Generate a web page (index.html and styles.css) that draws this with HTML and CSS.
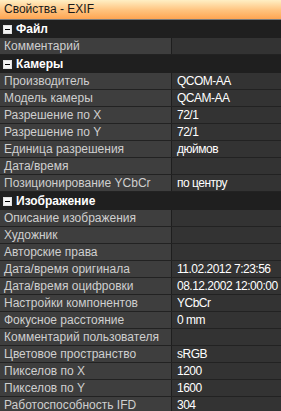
FILE: index.html
```html
<!DOCTYPE html>
<html>
<head>
<meta charset="utf-8">
<link rel="stylesheet" href="styles.css">
</head>
<body>
<div class="panel">
  <div class="title">Свойства - EXIF</div>
  <div class="grid">
    <div class="cat"><span class="box"></span>Файл</div>
    <div class="row"><div class="name">Комментарий</div><div class="val"></div></div>
    <div class="cat"><span class="box"></span>Камеры</div>
    <div class="row"><div class="name">Производитель</div><div class="val">QCOM-AA</div></div>
    <div class="row"><div class="name">Модель камеры</div><div class="val">QCAM-AA</div></div>
    <div class="row"><div class="name">Разрешение по X</div><div class="val">72/1</div></div>
    <div class="row"><div class="name">Разрешение по Y</div><div class="val">72/1</div></div>
    <div class="row"><div class="name">Единица разрешения</div><div class="val">дюймов</div></div>
    <div class="row"><div class="name">Дата/время</div><div class="val"></div></div>
    <div class="row"><div class="name">Позиционирование YCbCr</div><div class="val">по центру</div></div>
    <div class="cat"><span class="box"></span>Изображение</div>
    <div class="row"><div class="name">Описание изображения</div><div class="val"></div></div>
    <div class="row"><div class="name">Художник</div><div class="val"></div></div>
    <div class="row"><div class="name">Авторские права</div><div class="val"></div></div>
    <div class="row"><div class="name">Дата/время оригинала</div><div class="val">11.02.2012 7:23:56</div></div>
    <div class="row"><div class="name">Дата/время оцифровки</div><div class="val">08.12.2002 12:00:00</div></div>
    <div class="row"><div class="name">Настройки компонентов</div><div class="val">YCbCr</div></div>
    <div class="row"><div class="name">Фокусное расстояние</div><div class="val">0 mm</div></div>
    <div class="row"><div class="name">Комментарий пользователя</div><div class="val"></div></div>
    <div class="row"><div class="name">Цветовое пространство</div><div class="val">sRGB</div></div>
    <div class="row"><div class="name">Пикселов по X</div><div class="val">1200</div></div>
    <div class="row"><div class="name">Пикселов по Y</div><div class="val">1600</div></div>
    <div class="row"><div class="name">Работоспособность IFD</div><div class="val">304</div></div>
  </div>
</div>
</body>
</html>
```
FILE: styles.css
```css
html, body {
  margin: 0;
  padding: 0;
  background: #202020;
}
.panel {
  width: 281px;
  height: 411px;
  overflow: hidden;
  font-family: "Liberation Sans", Arial, sans-serif;
  font-size: 12px;
  background: #202020;
}
.title {
  height: 19px;
  line-height: 19px;
  padding-left: 4px;
  color: #1a1a1a;
  font-size: 12px;
  background: linear-gradient(#ffefc4, #ffc27d 55%, #ffa552);
  border-bottom: 1px solid #7a7a7a;
}
.grid {
  display: flex;
  flex-direction: column;
}
.cat {
  height: 18px;
  display: flex;
  align-items: center;
  color: #ffffff;
  font-weight: bold;
  font-size: 12px;
  background: #1f1f1f;
}
.box {
  width: 7px;
  height: 7px;
  margin: 0 4px 0 3px;
  background: #f4f4f4;
  border: 1px solid #e0e0e0;
  position: relative;
  flex: none;
}
.box::after {
  content: "";
  position: absolute;
  left: 1px;
  right: 1px;
  top: 3px;
  height: 1px;
  background: #000;
}
.row {
  display: flex;
  height: 16px;
  border-bottom: 1px solid #222;
}
.name {
  width: 167px;
  padding-left: 4px;
  line-height: 17px;
  color: #cfcfcf;
  background: #3e3e3e;
  border-right: 1px solid #1e1e1e;
  white-space: nowrap;
  overflow: hidden;
}
.val {
  flex: 1;
  padding-left: 5px;
  line-height: 17px;
  font-size: 12px;
  letter-spacing: -0.5px;
  color: #ffffff;
  background: #333333;
  white-space: nowrap;
  overflow: hidden;
}
```
